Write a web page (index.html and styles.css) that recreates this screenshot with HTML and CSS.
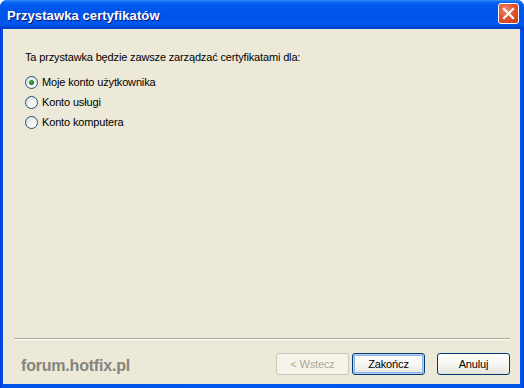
FILE: index.html
```html
<!DOCTYPE html>
<html lang="pl">
<head>
<meta charset="utf-8">
<title>Przystawka certyfikatów</title>
<link rel="stylesheet" href="styles.css">
</head>
<body>
<div class="window">
  <div class="titlebar">
    <span class="title">Przystawka certyfikatów</span>
    <button class="close" aria-label="Zamknij">
      <svg width="13" height="13" viewBox="0 0 13 13"><path d="M2 2 L11 11 M11 2 L2 11" stroke="#fff" stroke-width="2.2" stroke-linecap="square"/></svg>
    </button>
  </div>
  <div class="client">
    <div class="content">
      <p class="intro">Ta przystawka będzie zawsze zarządzać certyfikatami dla:</p>
      <div class="options">
        <label class="option"><span class="radio checked"></span><span>Moje konto użytkownika</span></label>
        <label class="option"><span class="radio"></span><span>Konto usługi</span></label>
        <label class="option"><span class="radio"></span><span>Konto komputera</span></label>
      </div>
    </div>
    <div class="separator"></div>
    <div class="footer">
      <span class="brand">forum.hotfix.pl</span>
      <div class="buttons">
        <button class="btn disabled">&lt; Wstecz</button>
        <button class="btn default">Zakończ</button>
        <button class="btn cancel">Anuluj</button>
      </div>
    </div>
  </div>
</div>
</body>
</html>
```
FILE: styles.css
```css
html, body {
  margin: 0;
  padding: 0;
  background: #ffffff;
}

.window {
  width: 524px;
  height: 388px;
  display: flex;
  flex-direction: column;
  background: linear-gradient(to right, #0831d9 0, #0055e5 2px, #0058ee 50%, #0055e5 calc(100% - 2px), #0831d9 100%);
  border-radius: 7px 7px 0 0;
  font-family: "Liberation Sans", Arial, sans-serif;
  font-size: 11px;
  letter-spacing: -0.15px;
  color: #000;
}

.titlebar {
  height: 29px;
  flex: none;
  display: flex;
  align-items: center;
  justify-content: space-between;
  padding: 0 5px 0 7px;
  border-radius: 7px 7px 0 0;
  background: linear-gradient(to bottom,
    #3b8cf5 0px, #0a6af8 2px, #0058ee 5px, #0055eb 12px,
    #0053e8 18px, #0058ef 24px, #0046d6 27px, #003ec8 29px);
}

.title {
  color: #ffffff;
  font-family: "Liberation Sans", Arial, sans-serif;
  font-weight: bold;
  font-size: 13px;
  letter-spacing: 0.1px;
  text-shadow: 1px 1px 0 #0a1883;
  padding-top: 1px;
}

.close {
  width: 21px;
  height: 21px;
  padding: 0;
  margin: 0;
  border: 1px solid #ffffff;
  border-radius: 3px;
  background: radial-gradient(circle at 35% 30%, #f08a6c 0, #e0532f 45%, #c8391a 100%);
  display: flex;
  align-items: center;
  justify-content: center;
  box-sizing: border-box;
  margin-top: -2px;
}

.close svg {
  display: block;
}

.client {
  flex: 1;
  margin: 0 4px 4px 3px;
  background: #ece9d8;
  display: flex;
  flex-direction: column;
}

.content {
  flex: 1;
  padding: 22px 0 0 22px;
}

.intro {
  margin: 0;
  line-height: 13px;
}

.options {
  margin-top: 8px;
  display: flex;
  flex-direction: column;
}

.option {
  height: 20px;
  display: flex;
  align-items: center;
  gap: 4px;
}

.radio {
  width: 13px;
  height: 13px;
  box-sizing: border-box;
  border: 1px solid #1c5180;
  border-radius: 50%;
  background: linear-gradient(135deg, #dcd9cd 0%, #f4f3ee 50%, #ffffff 100%);
  display: flex;
  align-items: center;
  justify-content: center;
}

.radio.checked::after {
  content: "";
  width: 5px;
  height: 5px;
  border-radius: 50%;
  background: radial-gradient(circle at 40% 40%, #3fae44 0, #1f7f22 60%, #155f18 100%);
}

.separator {
  height: 1px;
  margin: 0 10px 0 11px;
  background: #aca899;
  border-bottom: 1px solid #ffffff;
}

.footer {
  display: flex;
  align-items: center;
  justify-content: space-between;
  padding: 13px 10px 9px 18px;
}

.brand {
  font-family: "Liberation Sans", Arial, sans-serif;
  font-weight: bold;
  font-size: 16px;
  letter-spacing: -0.2px;
  color: #85847e;
  padding-top: 3px;
}

.buttons {
  display: flex;
  gap: 3px;
}

.btn {
  width: 73px;
  height: 22px;
  box-sizing: border-box;
  border: 1px solid #003c74;
  border-radius: 3px;
  background: linear-gradient(to bottom, #ffffff 0%, #f4f4f0 60%, #e3e2da 100%);
  font-family: "Liberation Sans", Arial, sans-serif;
  font-size: 11px;
  letter-spacing: -0.15px;
  color: #000;
  padding: 0;
}

.btn.disabled {
  border-color: #c9c7ba;
  background: #f5f4ea;
  color: #aca899;
}

.btn.default {
  box-shadow: inset 0 0 0 1px #b8d0f8, inset 0 0 0 2px #8fb0ea;
}

.btn.cancel {
  margin-left: 9px;
}
```
